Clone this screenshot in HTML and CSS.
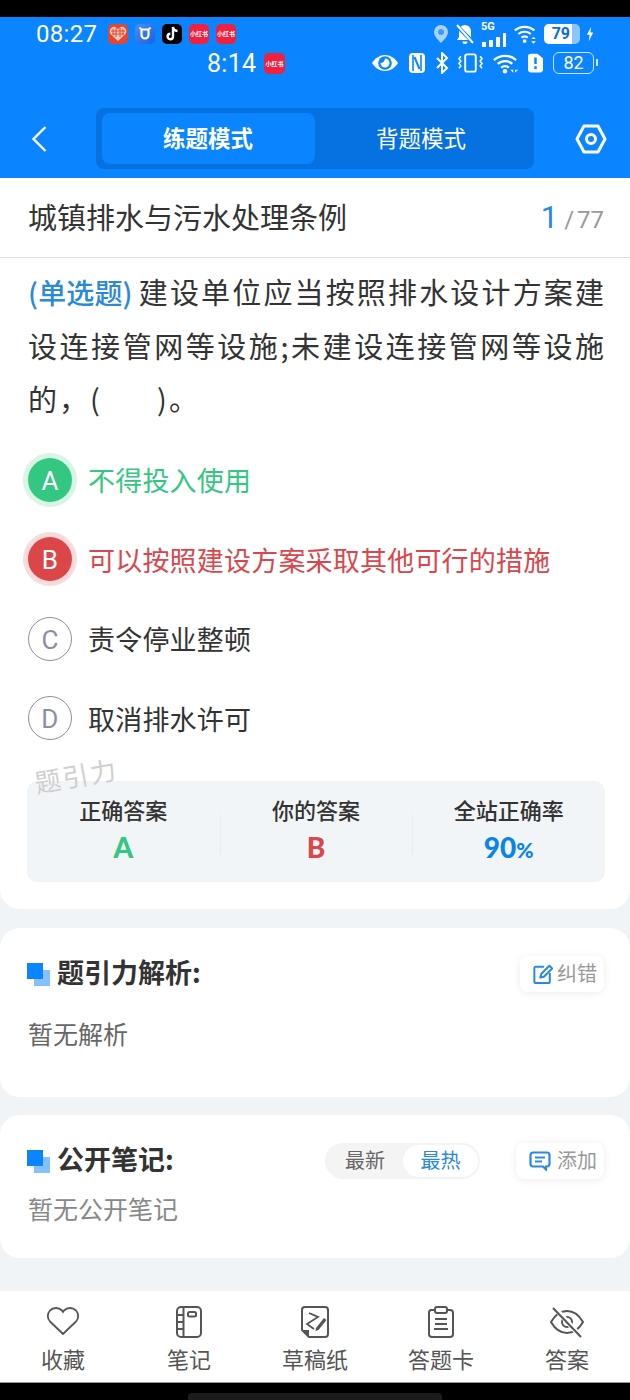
FILE: index.html
```html
<!DOCTYPE html>
<html lang="en">
<head>
    <meta charset="UTF-8">
    <meta name="viewport" content="width=device-width, initial-scale=1.0">
    <title>城镇排水与污水处理条例</title>
    <link rel="stylesheet" href="styles.css">
</head>
<body>
    <div class="top-black"></div>
    <header class="header">
        <div class="status-row first">
            <div class="status-left">
                <span class="clock">08:27</span>
                <span class="app app-heart"><svg width="18" height="15" viewBox="0 0 18 15"><path d="M9 15L2 8.500A4.500 4.500 0 0 1 2 2.200a4.500 4.500 0 0 1 6 0l1 1 1-1a4.500 4.500 0 0 1 6 0 4.500 4.500 0 0 1 0 6.300z" fill="#f6c9bb"/><path d="M4 3v6M7 2v9M11 2v9M14 3v6M2 5h14M3 8h12" stroke="#e8452f" stroke-width="1"/></svg></span>
                <span class="app app-shield"><svg width="14" height="15" viewBox="0 0 14 15"><path d="M1.500 1.500c1 1.500 2 2 3 2h5c1 0 2-.5 3-2M3.500 3.500v5.500a3.500 3.500 0 0 0 7 0V3.500" fill="none" stroke="#fff" stroke-width="2.200"/></svg></span>
                <span class="app app-tiktok"><svg width="14" height="16" viewBox="0 0 14 16"><path d="M8 1v9.500a2.700 2.700 0 1 1-2.700-2.700M8 1c.4 2.500 2 3.800 4.500 4" fill="none" stroke="#fff" stroke-width="2.400"/></svg></span>
                <span class="app app-red">小红书</span>
                <span class="app app-red">小红书</span>
            </div>
            <div class="status-right">
                <svg width="16" height="20" viewBox="0 0 16 20"><path d="M8 1a7 7 0 0 1 7 7c0 4-4 8-7 11-3-3-7-7-7-11a7 7 0 0 1 7-7z" fill="#a9d3fb"/><circle cx="8" cy="8" r="3" fill="#3f9bf8"/></svg>
                <svg width="20" height="22" viewBox="0 0 20 22"><path d="M10 2a6 6 0 0 1 6 6v6l2 3H2l2-3V8a6 6 0 0 1 6-6zM7.500 18.500h5a2.500 2.500 0 0 1-5 0z" fill="#fff"/><path d="M1 2l18 18" stroke="#0a84ff" stroke-width="4"/><path d="M2 2l16 18" stroke="#fff" stroke-width="2"/></svg>
                <span class="signal">
                    <span class="net">5G</span>
                    <svg width="26" height="14" viewBox="0 0 26 14"><path d="M1 9h4v5H1zM8 7h4v7H8zM15 4h4v10h-4zM22 0h3v14h-3z" fill="#fff"/></svg>
                </span>
                <svg width="25" height="22" viewBox="0 0 28 22"><path d="M2 7a17 17 0 0 1 22 0M6 11a11 11 0 0 1 14 0M9.500 15a5.500 5.500 0 0 1 7 0" fill="none" stroke="#fff" stroke-width="2.400"/><circle cx="13" cy="19" r="2" fill="#fff"/><path d="M23 14l2.500 2.500h-5zM23 22l2.500-3h-5z" fill="#fff"/></svg>
                <span class="batt-solid"><span class="batt-fill">79</span></span>
                <svg width="8" height="18" viewBox="0 0 10 18"><path d="M6.500 0L1 10h3.500L3.500 18 9 7H5.500z" fill="#fff"/></svg>
            </div>
        </div>
        <div class="status-row second">
            <div class="status-left">
                <span class="clock clock-small">8:14</span>
                <span class="app app-red big">小红书</span>
            </div>
            <div class="status-right tight">
                <svg width="28" height="18" viewBox="0 0 28 18"><path d="M1 9c3-5 8-8 13-8s10 3 13 8c-3 5-8 8-13 8S4 14 1 9z" fill="#fff"/><circle cx="14" cy="9" r="6.800" fill="#0a84ff"/><path d="M14 4.500a4.500 4.500 0 1 1-4.500 4.500c2.500 0 4.500-2 4.500-4.500z" fill="#fff"/></svg>
                <svg width="18" height="22" viewBox="0 0 18 22"><rect x="1" y="1" width="16" height="20" rx="4" fill="#fff"/><path d="M5 3v16M13 3v16" stroke="#0a84ff" stroke-width="1.600"/><path d="M6.500 5l5 12" stroke="#0a84ff" stroke-width="2"/></svg>
                <svg width="14" height="22" viewBox="0 0 14 22"><path d="M2 6l10 10-5 5V1l5 5L2 16" fill="none" stroke="#fff" stroke-width="2"/></svg>
                <svg width="25" height="22" viewBox="0 0 26 22"><rect x="7.500" y="2" width="11" height="18" rx="2" fill="none" stroke="#fff" stroke-width="2"/><path d="M3 4l-2 2.500 2 2.500-2 2.500 2 2.500-2 2.500M23 4l2 2.500-2 2.500 2 2.500-2 2.500 2 2.500" fill="none" stroke="#fff" stroke-width="1.600"/></svg>
                <svg width="27" height="22" viewBox="0 0 28 22"><path d="M2 8a17 17 0 0 1 23 0M6 12a11 11 0 0 1 15 0M9.500 16a5.500 5.500 0 0 1 8 0" fill="none" stroke="#fff" stroke-width="2.400"/><circle cx="13.500" cy="19.500" r="2.300" fill="#fff"/><path d="M19 18h3v3zM27 18h-3v3z" fill="#fff"/></svg>
                <svg width="15" height="20" viewBox="0 0 16 20"><path d="M3 0h7l6 5v12a3 3 0 0 1-3 3H3a3 3 0 0 1-3-3V3a3 3 0 0 1 3-3z" fill="#fff"/><path d="M8 4v7M8 13.500v3" stroke="#0a84ff" stroke-width="2.600"/></svg>
                <span class="batt-outline">82</span>
            </div>
        </div>
        <div class="nav-row">
            <svg width="16" height="28" viewBox="0 0 16 28"><path d="M14.500 2L2.500 14l12 12" fill="none" stroke="#fff" stroke-width="2.400"/></svg>
            <div class="tabs">
                <div class="tab active">练题模式</div>
                <div class="tab">背题模式</div>
            </div>
            <svg width="32" height="30" viewBox="0 0 32 30"><path d="M9 2h14l7 13-7 13H9L2 15z" fill="none" stroke="#fff" stroke-width="3" stroke-linejoin="round"/><circle cx="16" cy="15" r="4.500" fill="none" stroke="#fff" stroke-width="3"/></svg>
        </div>
    </header>

    <main class="main">
        <section class="card question-card">
            <div class="title-row">
                <div class="title">城镇排水与污水处理条例</div>
                <div class="progress"><span class="progress-now">1</span><span class="progress-all">/ 77</span></div>
            </div>
            <div class="question"><span class="q-type">(单选题)</span>建设单位应当按照排水设计方案建设连接管网等设施;未建设连接管网等设施的，(&emsp;&ensp;&thinsp;)。</div>
            <div class="options">
                <div class="option correct"><span class="letter">A</span><span>不得投入使用</span></div>
                <div class="option wrong"><span class="letter">B</span><span>可以按照建设方案采取其他可行的措施</span></div>
                <div class="option"><span class="letter">C</span><span>责令停业整顿</span></div>
                <div class="option"><span class="letter">D</span><span>取消排水许可</span></div>
            </div>
            <div class="stats-wrap">
                <div class="watermark">题引力</div>
                <div class="stats">
                    <div class="stat">
                        <div class="stat-label">正确答案</div>
                        <div class="stat-value green">A</div>
                    </div>
                    <div class="stat">
                        <div class="stat-label">你的答案</div>
                        <div class="stat-value red">B</div>
                    </div>
                    <div class="stat">
                        <div class="stat-label">全站正确率</div>
                        <div class="stat-value blue">90<small>%</small></div>
                    </div>
                </div>
            </div>
        </section>

        <section class="card analysis-card">
            <div class="section-head">
                <span class="mark"></span>
                <h2>题引力解析:</h2>
                <div class="pill-btn correct-btn">
                    <svg width="20" height="20" viewBox="0 0 22 22"><path d="M12 3H3a1.500 1.500 0 0 0-1.500 1.500v15A1.500 1.500 0 0 0 3 21h14a1.500 1.500 0 0 0 1.500-1.500V10" fill="none" stroke="#2a8ad8" stroke-width="2.200"/><path d="M8 15l1-4L18 2l3 3-9 9z" fill="none" stroke="#2a8ad8" stroke-width="2.200" stroke-linejoin="round"/></svg>
                    <span>纠错</span>
                </div>
            </div>
            <p class="empty">暂无解析</p>
        </section>

        <section class="card notes-card">
            <div class="section-head">
                <span class="mark"></span>
                <h2>公开笔记:</h2>
                <div class="sort">
                    <span class="sort-item">最新</span>
                    <span class="sort-item on">最热</span>
                </div>
                <div class="pill-btn add-btn">
                    <svg width="22" height="20" viewBox="0 0 22 20"><path d="M4 1.500h14A2.500 2.500 0 0 1 20.500 4v9a2.500 2.500 0 0 1-2.500 2.500h-1v3l-3-3H4A2.500 2.500 0 0 1 1.500 13V4A2.500 2.500 0 0 1 4 1.500z" fill="none" stroke="#2a8ad8" stroke-width="2.200"/><path d="M6 6.500h10M6 10.500h7" stroke="#2a8ad8" stroke-width="2"/></svg>
                    <span>添加</span>
                </div>
            </div>
            <p class="empty light">暂无公开笔记</p>
        </section>
    </main>

    <nav class="bottom-nav">
        <div class="nav-item">
            <svg width="34" height="32" viewBox="0 0 34 32"><path d="M17 28L4 15.500a8 8 0 0 1 0-11 8.500 8.500 0 0 1 12 0l1 1.500 1-1.500a8.500 8.500 0 0 1 12 0 8 8 0 0 1 0 11z" fill="none" stroke="#555" stroke-width="1.800"/></svg>
            <span>收藏</span>
        </div>
        <div class="nav-item">
            <svg width="28" height="32" viewBox="0 0 28 32"><rect x="2" y="1" width="24" height="30" rx="4" fill="none" stroke="#555" stroke-width="2"/><path d="M8.500 1v30M2 9h6.500M2 16h6.500M2 23h6.500" fill="none" stroke="#555" stroke-width="2"/><rect x="13" y="6" width="8" height="4.500" rx="1.500" fill="none" stroke="#555" stroke-width="2"/></svg>
            <span>笔记</span>
        </div>
        <div class="nav-item">
            <svg width="30" height="32" viewBox="0 0 30 32"><path d="M2 4a3 3 0 0 1 3-3h20a3 3 0 0 1 3 3v24a3 3 0 0 1-3 3H9l-7-7z" fill="none" stroke="#555" stroke-width="2"/><path d="M2 24h7v7z" fill="#555"/><path d="M9 7l9 4-11 7 7 5" fill="none" stroke="#555" stroke-width="1.800"/><path d="M16 22l8-10 2.500 2-8 10-3 1z" fill="#555"/></svg>
            <span>草稿纸</span>
        </div>
        <div class="nav-item">
            <svg width="28" height="32" viewBox="0 0 28 32"><path d="M7 4H4a3 3 0 0 0-2 3v21a3 3 0 0 0 3 3h18a3 3 0 0 0 3-3V7a3 3 0 0 0-3-3h-2" fill="none" stroke="#555" stroke-width="2"/><rect x="8" y="1" width="12" height="6" rx="2" fill="none" stroke="#555" stroke-width="2"/><path d="M8 13h12M8 18h12M7 23h14" stroke="#555" stroke-width="2"/></svg>
            <span>答题卡</span>
        </div>
        <div class="nav-item">
            <svg width="36" height="32" viewBox="0 0 36 32"><path d="M2 16c4-7 10-11 16-11s12 4 16 11c-4 7-10 11-16 11S6 23 2 16z" fill="none" stroke="#555" stroke-width="2"/><circle cx="18" cy="16" r="5" fill="none" stroke="#555" stroke-width="2"/><path d="M5 1l27 30" stroke="#fff" stroke-width="5"/><path d="M4 2l28 29" stroke="#555" stroke-width="2"/></svg>
            <span>答案</span>
        </div>
    </nav>
    <div class="home-area"><div class="home-bar"></div></div>
</body>
</html>
```

FILE: styles.css
```css
* {
    box-sizing: border-box;
}
body {
    font-family: "Noto Sans CJK SC", "Noto Sans", sans-serif;
    margin: 0;
    width: 630px;
    height: 1400px;
    display: flex;
    flex-direction: column;
    background: #f0f4f7;
    color: #333;
    overflow: hidden;
}
.top-black {
    height: 17px;
    background: #000;
}
.header {
    height: 161px;
    background: #0a84ff;
    color: #fff;
}
.status-row {
    display: flex;
    justify-content: space-between;
    align-items: center;
}
.status-row.first {
    height: 33px;
    padding: 0 36px 0 36px;
}
.status-row.second {
    height: 28px;
    padding: 0 36px 0 207px;
    margin-top: -1px;
}
.status-left,
.status-right {
    display: flex;
    align-items: center;
}
.status-left {
    gap: 7px;
}
.status-right {
    gap: 6px;
}
.status-right.tight {
    gap: 9px;
}
.clock {
    font-family: "Roboto", sans-serif;
    font-size: 24px;
    letter-spacing: 0.3px;
    width: 65px;
}
.clock-small {
    font-size: 25px;
    width: 50px;
}
.app {
    width: 20px;
    height: 20px;
    border-radius: 5px;
    display: flex;
    align-items: center;
    justify-content: center;
    overflow: hidden;
}
.app-heart {
    background: #e8452f;
}
.app-shield {
    background: linear-gradient(135deg, #4e8df5, #1a5fe0);
}
.app-tiktok {
    background: #000;
}
.app-red {
    background: #f0203f;
    color: #fff;
    font-size: 6px;
    font-weight: 700;
    white-space: nowrap;
}
.app-red.big {
    width: 21px;
    height: 21px;
}
.signal {
    position: relative;
    width: 26px;
    height: 26px;
    display: flex;
    align-items: flex-end;
}
.net {
    position: absolute;
    left: 0;
    top: -1px;
    font-family: "Roboto", sans-serif;
    font-size: 11px;
    font-weight: 700;
}
.batt-solid {
    width: 36px;
    height: 20px;
    border-radius: 5px;
    background: #8cc4fd;
    overflow: hidden;
    display: block;
}
.batt-fill {
    display: block;
    width: 28px;
    height: 20px;
    background: #fff;
    color: #0a6fd8;
    font-family: "Roboto", sans-serif;
    font-size: 16px;
    font-weight: 700;
    line-height: 20px;
    text-align: right;
    padding-right: 2px;
}
.batt-outline {
    position: relative;
    width: 41px;
    height: 22px;
    margin-left: 1px;
    border: 1.5px solid #cfe6fe;
    border-radius: 6px;
    font-family: "Roboto", sans-serif;
    font-size: 18px;
    line-height: 19px;
    text-align: center;
}
.batt-outline::after {
    content: "";
    position: absolute;
    right: -5px;
    top: 6px;
    width: 2px;
    height: 7px;
    background: #cfe6fe;
}
.nav-row {
    display: flex;
    align-items: center;
    justify-content: space-between;
    margin-top: 31px;
    padding: 0 23px 0 31px;
    height: 61px;
}
.tabs {
    width: 438px;
    height: 61px;
    margin-left: 7px;
    padding: 5px 0 5px 6px;
    display: flex;
    background: #0672e2;
    border-radius: 8px;
}
.tab {
    width: 213px;
    display: flex;
    align-items: center;
    justify-content: center;
    padding-bottom: 4px;
    font-size: 22.500px;
    border-radius: 8px;
}
.tab.active {
    background: #0a84ff;
    font-weight: 700;
}
.main {
    flex: 1;
}
.card {
    background: #fff;
    border-radius: 20px;
}
.question-card {
    height: 731px;
    border-radius: 0 0 20px 20px;
}
.title-row {
    height: 80px;
    display: flex;
    align-items: center;
    justify-content: space-between;
    padding: 0 26px 0 28px;
    border-bottom: 1px solid #e2e2e2;
}
.title {
    font-size: 29px;
    padding-bottom: 3px;
    color: #333;
}
.progress {
    font-family: "Roboto", sans-serif;
    font-size: 24px;
    color: #999;
}
.progress-now {
    font-size: 31px;
    margin-right: 6px;
    color: #2a8ad8;
}
.progress-all {
    word-spacing: -3px;
}
.question {
    margin: 7px 24px 0 28px;
    font-size: 29px;
    line-height: 53px;
    letter-spacing: 2px;
    text-align: justify;
    color: #333;
}
.q-type {
    color: #2a8ad8;
    font-size: 28px;
    font-weight: 500;
    letter-spacing: 0;
    margin-right: 6px;
}
.options {
    margin-top: 15px;
    padding-left: 28px;
}
.option {
    height: 79.500px;
    display: flex;
    align-items: center;
    gap: 16px;
    font-size: 27px;
    letter-spacing: 0.2px;
    color: #333;
}
.letter {
    width: 44px;
    height: 44px;
    padding-top: 2px;
    border-radius: 50%;
    border: 1.5px solid #8c8f9e;
    color: #8c8f9e;
    display: flex;
    align-items: center;
    justify-content: center;
    font-family: "Roboto", sans-serif;
    font-size: 26px;
    flex-shrink: 0;
}
.correct {
    color: #34c781;
}
.correct .letter {
    background: #34c781;
    border: none;
    color: #fff;
    box-shadow: 0 0 0 5px #d8f5e6;
}
.wrong {
    color: #d9474c;
}
.wrong .letter {
    background: #dd4649;
    border: none;
    color: #fff;
    box-shadow: 0 0 0 5px #f8dcdc;
}
.stats-wrap {
    position: relative;
    margin: 23px 25px 0 27px;
}
.watermark {
    position: absolute;
    left: 7px;
    top: -25px;
    font-size: 26px;
    color: #cfcfcf;
    letter-spacing: 2px;
    transform: rotate(-10deg);
}
.stats {
    height: 101px;
    display: grid;
    grid-template-columns: repeat(3, 1fr);
    background: #f2f5f8;
    border-radius: 10px;
    padding-top: 13px;
}
.stat {
    position: relative;
    text-align: center;
}
.stat + .stat::before {
    content: "";
    position: absolute;
    left: 0;
    top: 20px;
    height: 40px;
    border-left: 1px solid #e9edf1;
}
.stat-label {
    font-size: 22px;
    font-weight: 500;
    line-height: 30px;
    color: #333;
}
.stat-value {
    font-family: "Lato", sans-serif;
    font-size: 28px;
    font-weight: 900;
    line-height: 42px;
    margin-top: 2px;
}
.stat-value small {
    font-size: 21px;
}
.green {
    color: #34c781;
}
.red {
    color: #d9474c;
}
.blue {
    color: #0a84e8;
}
.analysis-card {
    margin-top: 19px;
    height: 169px;
    padding: 28px 26px 0 27px;
}
.notes-card {
    margin-top: 18px;
    height: 143px;
    padding: 28px 26px 0 27px;
}
.section-head {
    display: flex;
    align-items: center;
    height: 36px;
}
.mark {
    position: relative;
    width: 23px;
    height: 23px;
    margin-right: 7px;
}
.mark::before,
.mark::after {
    content: "";
    position: absolute;
    width: 16px;
    height: 16px;
}
.mark::before {
    right: 0;
    bottom: 0;
    background: #85c1fd;
}
.mark::after {
    left: 0;
    top: 0;
    background: #0a84ff;
}
.section-head h2 {
    flex: 1;
    margin: 0;
    padding-bottom: 5px;
    font-size: 27px;
    font-weight: 700;
    color: #333;
}
.pill-btn {
    height: 36px;
    display: flex;
    align-items: center;
    gap: 4px;
    padding: 0 7px 0 13px;
    background: #fff;
    border-radius: 8px;
    box-shadow: 0 1px 8px rgba(0, 0, 0, 0.08);
    font-size: 20px;
    color: #999;
}
.pill-btn span {
    margin-top: -4px;
}
.add-btn {
    gap: 6px;
}
.sort {
    display: flex;
    align-items: center;
    width: 155px;
    height: 36px;
    margin-right: 36px;
    background: #f4f4f4;
    border-radius: 18px;
    font-size: 20px;
}
.sort-item {
    flex: 1;
    height: 32px;
    line-height: 30px;
    text-align: center;
    color: #666;
    padding-left: 2px;
}
.sort-item.on {
    flex: none;
    width: 75px;
    margin-right: 2px;
    background: #fff;
    border-radius: 16px;
    color: #2a8ad8;
    padding-left: 0;
}
.empty {
    margin: 23px 0 0 1px;
    font-size: 25px;
    line-height: 36px;
    color: #666;
}
.empty.light {
    margin-top: 11px;
    color: #888;
}
.bottom-nav {
    height: 92px;
    background: #fff;
    display: grid;
    grid-template-columns: repeat(5, 1fr);
    border-bottom: 1px solid #999;
    flex-shrink: 0;
}
.nav-item {
    display: flex;
    flex-direction: column;
    align-items: center;
    padding-top: 15px;
    font-size: 22px;
    color: #555;
}
.nav-item span {
    line-height: 32px;
    margin-top: 4px;
}
.home-area {
    height: 17px;
    background: #000;
    flex-shrink: 0;
    display: flex;
    justify-content: center;
    padding-top: 10px;
}
.home-bar {
    width: 254px;
    height: 7px;
    background: #1c1c1c;
    border-radius: 4px 4px 0 0;
}
```
